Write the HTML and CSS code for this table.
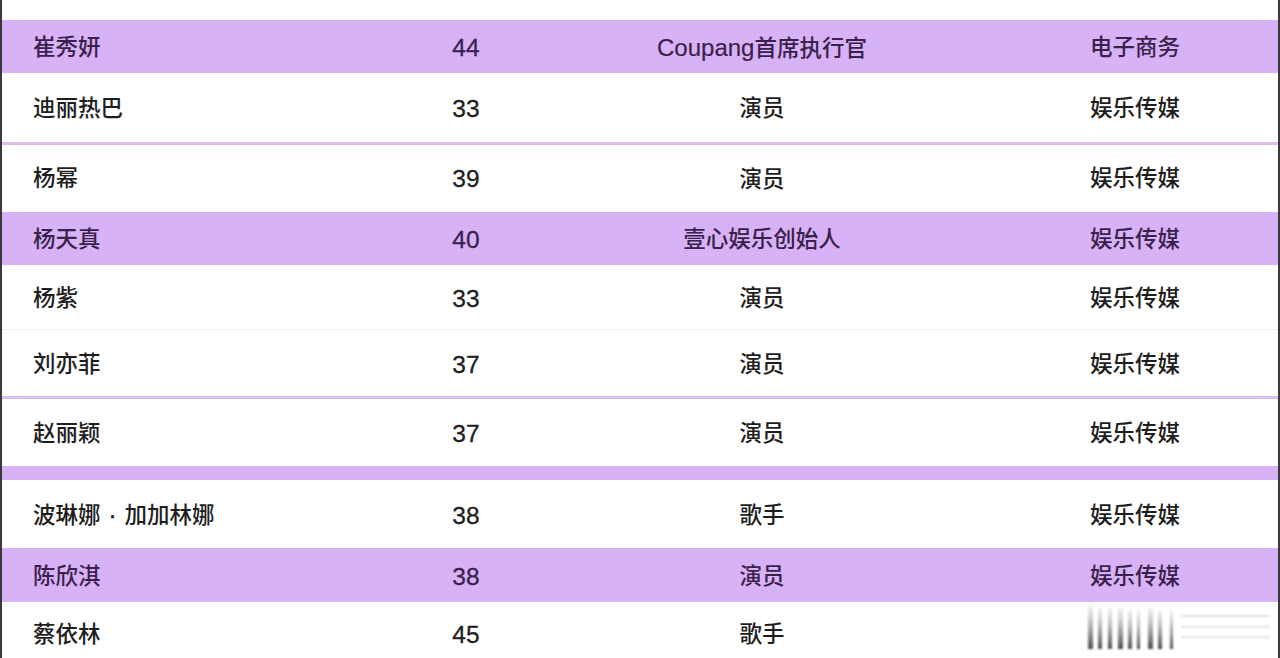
FILE: index.html
```html
<!DOCTYPE html>
<html lang="zh-CN">
<head>
<meta charset="utf-8">
<title>表格</title>
<link rel="stylesheet" href="styles.css">
</head>
<body>
<div class="table">
  <div class="row top"></div>
  <div class="row purple h53"><div class="c name">崔秀妍</div><div class="c num">44</div><div class="c"><span class="lat">Coupang</span>首席执行官</div><div class="c">电子商务</div></div>
  <div class="row h69"><div class="c name">迪丽热巴</div><div class="c num">33</div><div class="c">演员</div><div class="c">娱乐传媒</div></div>
  <div class="sep"></div>
  <div class="row h67"><div class="c name up">杨幂</div><div class="c num up">39</div><div class="c">演员</div><div class="c up">娱乐传媒</div></div>
  <div class="row purple h53"><div class="c name">杨天真</div><div class="c num">40</div><div class="c">壹心娱乐创始人</div><div class="c">娱乐传媒</div></div>
  <div class="row h65 faint"><div class="c name">杨紫</div><div class="c num">33</div><div class="c">演员</div><div class="c">娱乐传媒</div></div>
  <div class="row h66"><div class="c name">刘亦菲</div><div class="c num">37</div><div class="c">演员</div><div class="c">娱乐传媒</div></div>
  <div class="sep"></div>
  <div class="row h67"><div class="c name">赵丽颖</div><div class="c num">37</div><div class="c">演员</div><div class="c">娱乐传媒</div></div>
  <div class="band"></div>
  <div class="row h68"><div class="c name">波琳娜 <span class="dot">·</span> 加加林娜</div><div class="c num">38</div><div class="c">歌手</div><div class="c">娱乐传媒</div></div>
  <div class="row purple h54"><div class="c name">陈欣淇</div><div class="c num">38</div><div class="c">演员</div><div class="c">娱乐传媒</div></div>
  <div class="row h55 last"><div class="c name">蔡依林</div><div class="c num">45</div><div class="c">歌手</div><div class="c"></div></div>
</div>
<svg class="mark" width="200" height="50" viewBox="0 0 200 50" aria-hidden="true">
  <defs>
    <linearGradient id="g" x1="0" y1="0" x2="0" y2="1">
      <stop offset="0" stop-color="#ccc" stop-opacity="0.3"/>
      <stop offset="0.5" stop-color="#888" stop-opacity="0.7"/>
      <stop offset="1" stop-color="#333" stop-opacity="0.9"/>
    </linearGradient>
  </defs>
  <g fill="url(#g)">
    <rect x="3" y="2" width="5" height="43"/>
    <rect x="13" y="4" width="4" height="41"/>
    <rect x="23" y="4" width="4" height="41"/>
    <rect x="33" y="4" width="5" height="41"/>
    <rect x="43" y="6" width="4" height="39"/>
    <rect x="52" y="6" width="3" height="39"/>
    <rect x="63" y="4" width="5" height="41"/>
    <rect x="73" y="6" width="4" height="39"/>
    <rect x="85" y="6" width="3" height="39"/>
  </g>
  <g stroke="#e4e4e4" stroke-width="2" fill="none">
    <line x1="96" y1="12" x2="185" y2="12"/>
    <line x1="96" y1="23" x2="185" y2="23"/>
    <line x1="96" y1="33" x2="185" y2="33"/>
  </g>
</svg>
</body>
</html>
```

FILE: styles.css
```css
html, body {
  margin: 0;
  padding: 0;
  background: #ffffff;
}

body {
  width: 1280px;
  height: 658px;
  overflow: hidden;
  position: relative;
  font-family: "Liberation Sans", "Noto Sans CJK SC", sans-serif;
}

.table {
  width: 1280px;
  height: 658px;
  box-sizing: border-box;
  border-left: 2px solid #3a3a3a;
  border-right: 2px solid #3a3a3a;
  display: flex;
  flex-direction: column;
}

.row {
  display: grid;
  grid-template-columns: 398px 132px 460px 286px;
  align-items: center;
  background: #ffffff;
  color: #1e1e1e;
  font-size: 22.5px;
  font-weight: 500;
  flex: none;
}

.row.purple {
  background: #d7b2f6;
  color: #3b1f4c;
}

.top { height: 20px; }
.h53 { height: 53px; }
.h54 { height: 54px; }
.h55 { height: 55px; }
.h65 { height: 65px; }
.h66 { height: 66px; }
.h67 { height: 67px; }
.h68 { height: 68px; }
.h69 { height: 69px; }

.faint {
  box-sizing: border-box;
  border-bottom: 1px solid #f3eef5;
}

.c {
  text-align: center;
  white-space: nowrap;
  line-height: 1;
  position: relative;
  top: 2px;
}

.c.num {
  font-size: 24.5px;
  -webkit-text-stroke: 0.3px currentColor;
}

.lat {
  font-size: 24px;
  -webkit-text-stroke: 0.2px currentColor;
}

.dot {
  margin: 0 2px;
  -webkit-text-stroke: 0.6px currentColor;
}

.c.name {
  text-align: left;
  padding-left: 31px;
}

.c.up {
  top: 1px;
}

.last .c {
  top: 6px;
}

.sep {
  height: 3px;
  background: #d9bdee;
  flex: none;
}

.band {
  height: 14px;
  background: #d7b2f6;
  flex: none;
}

.mark {
  position: absolute;
  left: 1085px;
  top: 604px;
  filter: blur(0.8px);
}
```
